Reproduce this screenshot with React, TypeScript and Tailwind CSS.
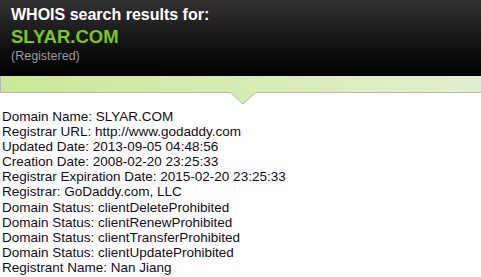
import React from "react";

const lines = [
  "Domain Name: SLYAR.COM",
  "Registrar URL: http://www.godaddy.com",
  "Updated Date: 2013-09-05 04:48:56",
  "Creation Date: 2008-02-20 23:25:33",
  "Registrar Expiration Date: 2015-02-20 23:25:33",
  "Registrar: GoDaddy.com, LLC",
  "Domain Status: clientDeleteProhibited",
  "Domain Status: clientRenewProhibited",
  "Domain Status: clientTransferProhibited",
  "Domain Status: clientUpdateProhibited",
  "Registrant Name: Nan Jiang",
];

export default function App() {
  return (
    <div className="w-[481px] h-[277px] overflow-hidden bg-white font-['Liberation_Sans',Arial,sans-serif]">
      {/* Header */}
      <div className="h-[76px] bg-gradient-to-b from-[#333333] to-[#020202] pl-[11px] pt-[5px]">
        <div className="text-[16px] font-bold leading-[20px] text-white">
          WHOIS search results for:
        </div>
        <div className="text-[18.5px] font-bold leading-[23px] text-[#7fc41f]">
          SLYAR.COM
        </div>
        <div className="text-[12.5px] leading-[17px] text-[#9a9a9a]">
          (Registered)
        </div>
      </div>

      {/* Green bar with pointer */}
      <div className="relative h-[17px] border-l border-b border-[#b5b5b5] bg-gradient-to-r from-[#cbe897] to-[#e2efcf]">
        <svg
          className="absolute left-[229px] top-[16px]"
          width="26"
          height="13"
          viewBox="0 0 26 13"
        >
          <path d="M0 0 L13 12 L26 0 Z" fill="#d6ebb4" />
          <path d="M0 0 L13 12 L26 0" fill="none" stroke="#b5b5b5" strokeWidth="1" />
          <rect x="1" y="0" width="24" height="1" fill="#d6ebb4" />
        </svg>
      </div>

      {/* Results */}
      <div className="pl-[2px] pt-[16px] text-[13.5px] leading-[15.1px] text-[#140a1e]">
        {lines.map((l) => (
          <div key={l}>{l}</div>
        ))}
      </div>
    </div>
  );
}
